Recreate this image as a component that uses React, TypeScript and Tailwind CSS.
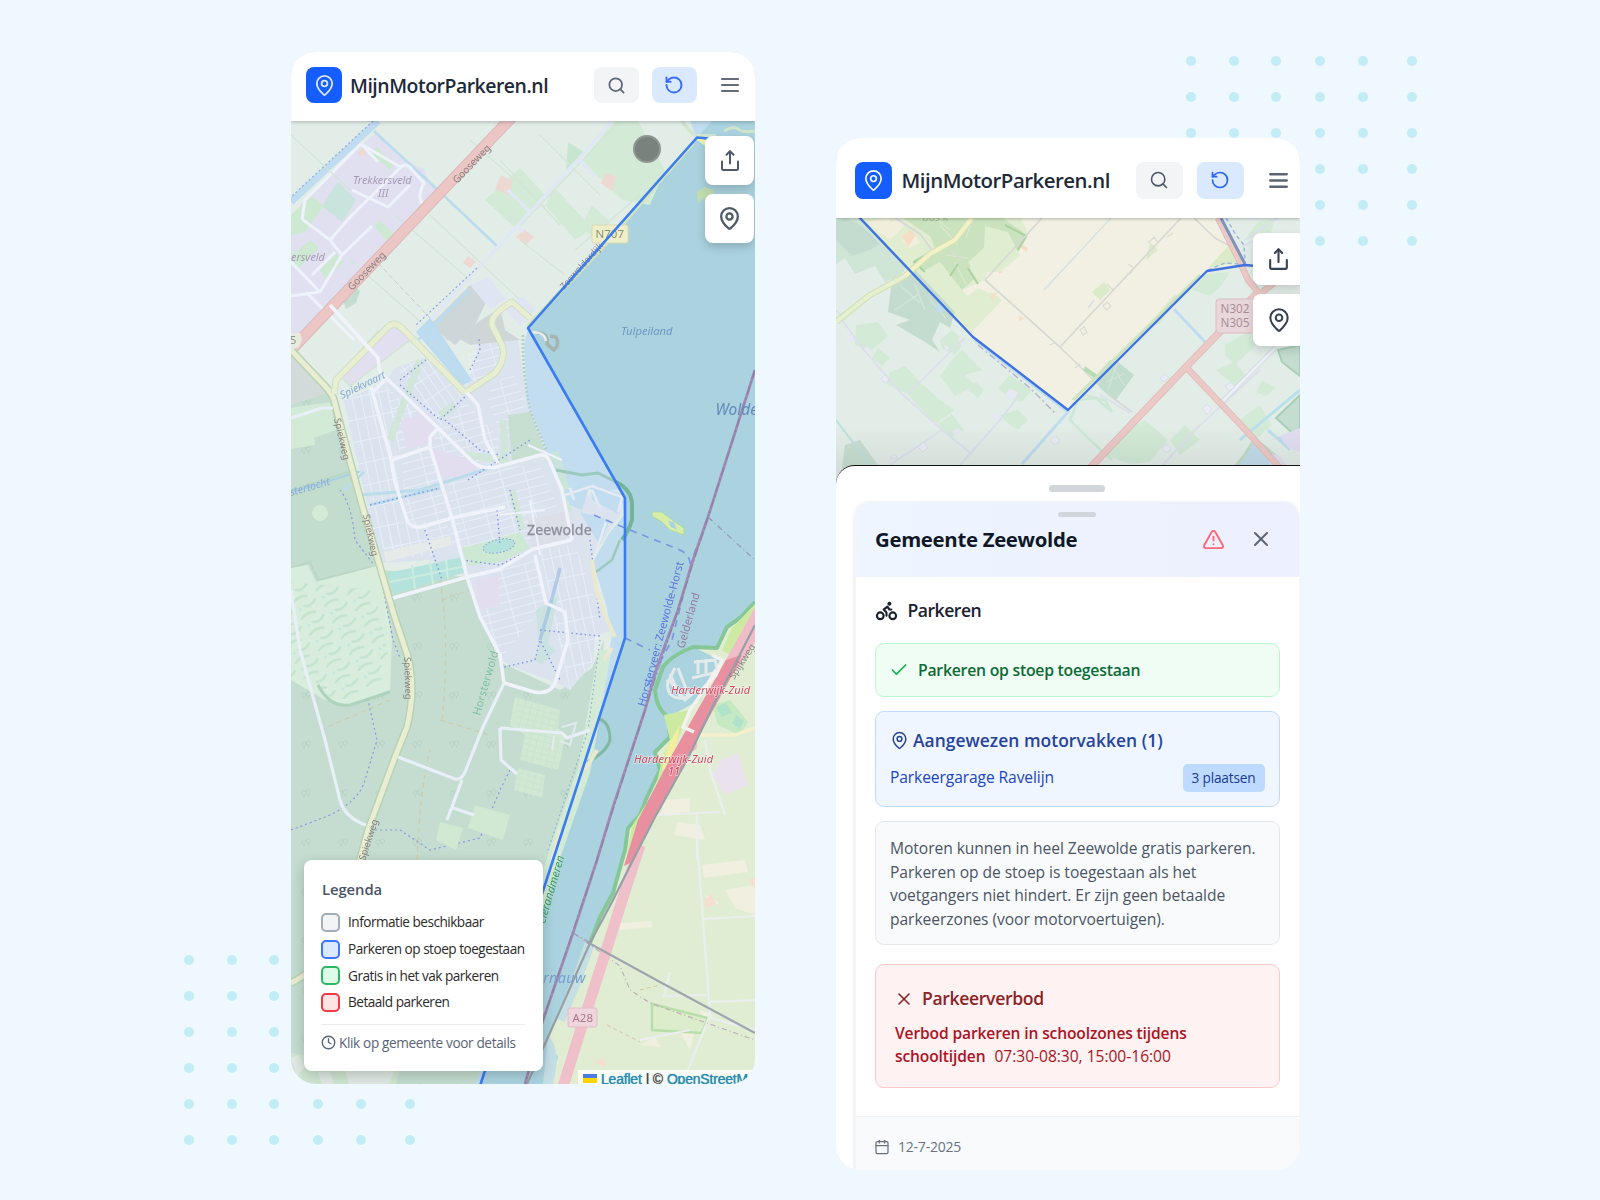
import React from 'react';
import { MapPin, Search, RotateCcw, TriangleAlert, X, Check, Calendar, Clock, Bike } from 'lucide-react';

const UI = "font-['Open_Sans','Noto_Sans',sans-serif]";

const COLS = [5, 48, 90, 134, 177, 226];
const ROWS = [5, 41, 77, 113, 149, 185];

function Dots() {
  return (
    <svg width="231" height="190" viewBox="0 0 231 190" fill="#c2ecf6">
      {ROWS.map((y) => COLS.map((x) => <circle key={x + '-' + y} cx={x} cy={y} r="5" />))}
    </svg>
  );
}

function ShareIcon({ size }: { size: number }) {
  return (
    <svg width={size} height={size} viewBox="0 0 24 24" fill="none" stroke="currentColor" strokeWidth="2" strokeLinecap="round" strokeLinejoin="round">
      <path d="M12 14.500V2.500" />
      <path d="m8.500 5.700 3.500-3.500L15.500 5.700" />
      <path d="M4 12.500v7a1.500 1.500 0 0 0 1.500 1.500h13a1.500 1.500 0 0 0 1.500-1.500v-7" />
    </svg>
  );
}

function MenuIcon({ size }: { size: number }) {
  return (
    <svg width={size} height={size} viewBox="0 0 24 24" fill="none" stroke="currentColor" strokeWidth="2.200" strokeLinecap="round">
      <path d="M4 6h16M4 12h16M4 18h16" />
    </svg>
  );
}

function Patterns() {
  return (
    <defs>
      <pattern id="stA" width="9" height="22" patternUnits="userSpaceOnUse" patternTransform="rotate(-12)">
        <path d="M0 0V22M0 0H9" stroke="#e9eff9" strokeWidth="2" fill="none" />
      </pattern>
      <pattern id="stB" width="24" height="8" patternUnits="userSpaceOnUse" patternTransform="rotate(-15)">
        <path d="M0 0V8M0 0H24" stroke="#e9eff9" strokeWidth="2" fill="none" />
      </pattern>
      <pattern id="stC" width="8" height="19" patternUnits="userSpaceOnUse" patternTransform="rotate(-34)">
        <path d="M0 0V19M0 0H8" stroke="#e9eff9" strokeWidth="2" fill="none" />
      </pattern>
      <pattern id="wood" width="37" height="49" patternUnits="userSpaceOnUse">
        <g fill="none" stroke="#b4d1c1" strokeWidth="0.8">
          <circle cx="8" cy="9" r="2.200" /><circle cx="12.500" cy="8" r="2.200" /><path d="M8 11v3M12.500 10v3" />
        </g>
      </pattern>
      <pattern id="holes" width="26" height="18" patternUnits="userSpaceOnUse" patternTransform="rotate(-28)">
        <path d="M2 4q8-4 15 0M10 12q6 4 13-1" stroke="#c4e3cf" strokeWidth="2.500" fill="none" strokeLinecap="round" />
        <circle cx="5" cy="13" r="1.500" fill="#bfe5e2" />
      </pattern>
      <pattern id="plots" width="7" height="6" patternUnits="userSpaceOnUse" patternTransform="rotate(14)">
        <path d="M0 0H7M0 0V6" stroke="#c6e0cc" strokeWidth="1" fill="none" />
      </pattern>
    </defs>
  );
}

function PhoneMap() {
  return (
    <svg className="absolute inset-0 font-['Noto_Sans',sans-serif] blur-[0.4px]" width="464" height="963" viewBox="291 121 464 963" fill="none">
      <Patterns />
      <rect x="291" y="121" width="464" height="963" fill="#aad3df" />
      {/* municipality */}
      <path d="M291 121H712L697 137.500 528 328 625 498V638L553 860 480 1084H291Z" fill="#c1ddef" />
      <path d="M291 121H690L697 139 528 328 524 345 527 400 545 445 548 470 566 488 620 490 624 515 608 535 593 562 606 605 612 635 602 690 588 770 566 830 540 900 476 1084H291Z" fill="#e3ede8" />
      <path d="M682 121q8 12 14 15h20" stroke="#d0e6d2" strokeWidth="4" />

      {/* industrial estates */}
      <path d="M376 133 406 160 425 170 430 185 437 190 352 282 334 296 320 320 291 345V225L300 205 355 150Z" fill="#e1e0f1" />
      <path d="M378 121 291 202" stroke="#bfdcf0" strokeWidth="7" />
      <path d="M373 121 291 197" stroke="#94aae0" strokeWidth="1.200" strokeDasharray="2 2.500" />
      <path d="M374 131 440 192 497 246" stroke="#bbdcec" strokeWidth="2.500" />
      <path d="M291 215 312 196 324 206 305 232 291 236ZM376 146l18 18-4 6-18-16ZM380 220l14 14-8 6-12-14Z" fill="#cde9d2" />
      <path d="M338 182 356 200 342 222 322 206Z" fill="#c8e4dc" />
      <path d="M291 255l20-15 8 8-22 22ZM320 270l16-16 8 8-18 18Z" fill="#cde9d2" />
      <path d="M302 219 305 200 361 144 378 162M330 240 342 255 320 292 291 296M330 240 352 215 402 166Q408 163 412 170L424 183Q416 198 424 206M342 255 372 226M302 219 330 240M306 292 322 308 354 340M352 190 388 207 410 185M312 275 335 252M291 262 320 292M361 144 402 168" stroke="#edf2fb" strokeWidth="3" strokeLinejoin="round" />

      {/* fields */}
      <path d="M615 121 638 121 665 170 650 205 622 200 582 160ZM520 168 545 195 515 228 485 200ZM555 188 592 228 575 240 545 205ZM592 205 610 222 600 240 580 228Z" fill="#d3ead7" />
      <path d="M568 142 584 152 566 170Z" fill="#c6e6d0" />
      <path d="M501 175l12 6-4 14-14-6ZM606 173l10 4-4 14-12-8ZM524 229l10 8-8 8-10-8ZM468 256l8 6-6 6-7-5ZM358 152l6-4 2 6-6 3Z" fill="#edd9d2" />
      <path d="M342 297l12-12 6 6-4 12-10 6Z" fill="#c4ddd0" />
      <path d="M291 135 350 190M430 215 520 300M350 260 430 330M395 215 470 280M500 160 560 225M540 135 600 195M575 250 640 195M520 240 565 275M620 121 520 226M470 140 545 207" stroke="#d2e5d6" strokeWidth="1.200" />
      <path d="M612 121 579 159 412 340M579 159 594 176M508 190 530 212M518 226 523 232" stroke="#dfe8f3" strokeWidth="3.500" />
      <path d="M477 268 416 325" stroke="#8fa6e6" strokeWidth="1.200" strokeDasharray="2 2.500" />
      <path d="M378 263 430 318" stroke="#c9cdb8" strokeWidth="1" strokeDasharray="5 3" />

      {/* Gooseweg */}
      <path d="M512 117 291 350" stroke="#d9b9b6" strokeWidth="11.500" />
      <path d="M512 117 291 350" stroke="#ebc6c5" strokeWidth="9.500" />

      {/* dark woodland */}
      <path d="M291 351 333 395 347 450 362 510 380 570 467 577 482 620 500 662 560 690 592 668 604 640 600 690 588 770 560 845 540 900 476 1084H291Z" fill="#c4ddd0" />
      <path d="M291 351 333 395 347 450 362 510 380 570 467 577 482 620 500 662 560 690 590 668 588 770 560 845 476 1084H291Z" fill="url(#wood)" />
      <path d="M291 355 330 392 291 405Z" fill="#d2dbda" />
      <path d="M291 408 330 402 336 430 291 446ZM291 425l20-5 4 25-24 4Z" fill="#d3ead7" />
      <path d="M291 490 355 470 380 565 318 580 310 562 291 568Z" fill="#c2dccd" stroke="#b7d5c3" strokeWidth="1.500" />
      <path d="M291 568 308 565 316 582 380 565 392 640 390 690 350 705 325 700 291 680Z" fill="#d9eddc" />
      <path d="M291 582 375 590 388 655 385 685 350 700 322 695 315 680 291 678Z" fill="url(#holes)" />
      <path d="M318 685Q330 708 350 705L390 692" stroke="#aed3bc" strokeWidth="3" />
      <circle cx="320" cy="513" r="8" fill="#d3ead7" />
      <path d="M291 492C320 485 330 480 365 470" stroke="#a9d0e4" strokeWidth="2" />
      <path d="M340 490Q352 505 355 540L374 565M291 830 330 815Q360 800 365 780L377 740 368 700M375 830 400 830 430 850 480 838 500 790 510 770M380 572 393 640 400 658" stroke="#8899dd" strokeWidth="1.200" strokeDasharray="2 3" />
      <path d="M440 580Q450 640 442 720M417 860Q420 790 430 750M440 720 490 735M442 600 470 590M320 730 390 700" stroke="#cfcba8" strokeWidth="1.200" strokeDasharray="5 4" />

      {/* grassy areas */}
      <path d="M515 697 560 710 558 728 566 735 558 770 520 760 525 735 510 725ZM518 768 545 775 542 798 514 790ZM475 805 510 815 503 840 468 828ZM440 822 463 828 456 850 436 840Z" fill="#d1e8d3" />
      <path d="M515 697 560 710 558 770 520 760ZM518 768 545 775 542 798 514 790Z" fill="url(#plots)" />
      <path d="M605 650 584 770 556 850 540 905" stroke="#d3ead7" strokeWidth="13" />
      <path d="M600 640 588 730 548 850" stroke="#8ea9d8" strokeWidth="1.200" strokeDasharray="1.500 3" />

      {/* town */}
      <path d="M343 400 383 383 397 367 423 358 467 387 480 340 518 340 527 397 547 453 563 487 580 497 620 490 622 513 610 530 590 560 600 607 613 630 595 637 593 663 570 690 557 683 513 667 500 660 480 617 467 577 430 560 380 563 360 473Z" fill="#dbe3ef" />
      <path d="M343 400 383 383 430 430 400 440 398 555 375 545 360 473Z" fill="url(#stA)" />
      <path d="M385 385 440 430 480 462 440 468 450 545 408 520 398 440Z" fill="url(#stB)" />
      <path d="M397 367 423 358 465 392 440 428Z" fill="url(#stC)" />
      <path d="M440 430 465 400 500 440 490 468 478 462ZM448 470 540 465 572 540 452 548Z" fill="url(#stB)" />
      <path d="M468 345 502 335 500 370 470 385ZM486 395 510 370 526 400 515 440 498 430Z" fill="url(#stB)" />
      <path d="M480 575 538 560 545 605 500 660 482 617Z" fill="url(#stB)" />
      <path d="M540 550 575 545 592 590 600 630 592 663 570 690 550 600Z" fill="url(#stA)" />
      <path d="M384 524 430 520 440 555 385 560Z" fill="url(#stA)" />
      <path d="M432 448 470 460 480 475 440 478ZM400 420 430 412 435 440 408 450ZM473 580 498 575 500 605 480 610Z" fill="#e3deef" />
      <path d="M508 415 530 412 545 452 512 462Z" fill="#c6dfd0" />
      <path d="M390 440 420 360M503 420 505 460 465 455M545 460 556 455 566 490 570 530M440 415 455 405M512 490 522 530" stroke="#cde6d3" strokeWidth="7" strokeOpacity=".8" />
      <path d="M388 573 462 557 466 572 394 594Z" fill="#b3e3dc" />
      <path d="M412 565l3 24M430 562l3 22M446 560l2 19M390 582 466 566" stroke="#cdebe0" strokeWidth="2" />
      <path d="M462 548 520 532 530 548 500 562 468 566Z" fill="#cde8d3" />
      <ellipse cx="499" cy="546" rx="16" ry="6.500" transform="rotate(-12 499 546)" fill="#b5e2dc" stroke="#8899dd" strokeDasharray="1.500 2" />
      <path d="M384 552 450 536 452 545 386 562Z" fill="#e6ebe9" />
      <path d="M528 520 570 510 576 535 532 548Z" fill="#dcdfe8" />
      <path d="M448 341Q458 325 470 330L478 322 500 308 505 330 520 340 470 345 430 322Z" fill="#cfd6d8" />
      <path d="M430 325 470 285 492 290 475 325 455 345Z" fill="#cdd6d8" />
      <path d="M418 340 470 290M470 380 450 350 430 320 418 332 462 384Z" stroke="#bbdcf0" strokeWidth="3" fill="#bfdcef" />
      <path d="M470 285l18-8 18 22-16 10ZM505 308l18-12 12 14-15 16Z" fill="#dfe5f2" />
      <path d="M377 332 398 322 410 340 350 386 340 375Z" fill="#e1dff0" stroke="#cfe6d5" strokeWidth="1.500" />
      <path d="M563 490 590 485 582 510 570 505ZM590 480 622 495 618 514 592 500ZM580 512 610 520 600 545" fill="#c1ddef" />
      <path d="M565 495 592 486 622 497 618 512M592 490 600 508M574 500 570 488M606 522 595 555" stroke="#e4ebf4" strokeWidth="2.500" />
      <path d="M536 610 558 596 545 660 540 665ZM543 640 556 650 543 664 534 660Z" fill="#cbe3e0" />
      <path d="M560 568Q552 600 540 640" stroke="#8fb5e5" strokeWidth="3.500" strokeOpacity=".55" />
      <path d="M360 495 420 490 490 468M370 505 440 488M364 472 345 490" stroke="#bbdcea" strokeWidth="3" />
      <path d="M400 380 432 355M400 385 440 420 470 392M468 480 530 440M445 420 480 450 500 455M470 370 480 350 479 338M510 490 520 530M370 505 440 488M425 530 442 580M497 510 500 545M462 560 500 565 530 550M590 540 600 620M500 668 535 660 540 640 560 680M540 630 600 636" stroke="#7f92e6" strokeWidth="1.400" strokeDasharray="1.500 3" />

      {/* shore details */}
      <path d="M556 470 582 475 598 473 618 483" stroke="#9cc9bd" strokeWidth="3" />
      <path d="M616 482Q632 490 632 505V520Q629 530 622 540" stroke="#74b49d" strokeWidth="4" />
      <path d="M620 540 612 560 596 572" stroke="#9cc9bd" strokeWidth="2.500" />
      <path d="M599 719Q610 722 610 740Q606 753 587 762" stroke="#7fb9a3" strokeWidth="3" />
      <path d="M592 560 596 590 605 615 615 637M604 660 612 648M597 750 585 770M560 830 552 860" stroke="#ebe8d0" strokeWidth="4" />
      <path d="M537 333Q549 333 547 344L554 350Q560 345 556 337L550 336" stroke="#a5b5b0" strokeWidth="3.500" />
      <path d="M531 332Q545 332 546 341" stroke="#e6ecec" strokeWidth="2.500" />
      <path d="M523 335Q522 370 530 410L546 450" stroke="#afd0c5" strokeWidth="2.500" strokeDasharray="2 2" />

      {/* yellow roads */}
      <path d="M291 350 325 386Q333 395 334 400L347 450 362 505 378 560 394 615 408 657Q416 690 407 727L395 757 368 830 357 870Q340 960 291 983" stroke="#b8d2b4" strokeWidth="8" />
      <path d="M291 350 325 386Q333 395 334 400L347 450 362 505 378 560 394 615 408 657Q416 690 407 727L395 757 368 830 357 870Q340 960 291 983" stroke="#e9eed3" strokeWidth="5" />
      <path d="M334 394 336 380 388 327Q394 321 402 328L465 393M465 393 495 373Q507 358 502 345L492 325Q490 315 512 302L530 318" stroke="#cfe0c4" strokeWidth="7" strokeLinejoin="round" />
      <path d="M334 394 336 380 388 327Q394 321 402 328L465 393M465 393 495 373Q507 358 502 345L492 325Q490 315 512 302L530 318" stroke="#e9eed3" strokeWidth="5" strokeLinejoin="round" />
      <path d="M528 326 560 292 605 245 650 192 693 143" stroke="#d3e2bd" strokeWidth="4" />

      {/* main town streets */}
      <path d="M330 305 378 358 380 372 437 427 473 462Q483 471 500 466L540 455Q547 454 550 462L562 490 572 540M371 387 390 455 395 482 407 520Q412 530 425 526L452 518M373 392 385 380M392 460 430 447 430 437 438 428M430 447 452 518 467 577 480 617 500 655 504 683 534 692Q552 695 556 680L568 640 565 612 546 603 535 555M393 598 467 577 500 569 533 549 572 540M467 393 478 405 485 440 498 463M452 518 505 507" stroke="#f0f3fb" strokeWidth="3.500" strokeLinejoin="round" />
      <path d="M504 683 483 727 465 772Q462 780 455 779L398 757M462 780 447 820M453 808 474 815M500 728 562 733 567 738 590 730M500 728 501 760 517 774M291 590 300 650 325 740 340 800Q345 818 366 825M291 418 322 408 333 408" stroke="#e9eff8" strokeWidth="3.200" strokeLinejoin="round" />
      <path d="M528 445 562 460M498 515 545 510M530 500 540 555" stroke="#edf2fb" strokeWidth="2" />
      <path d="M562 727l14-4-6 22-10-4M552 750l2-14" stroke="#e2eaf0" strokeWidth="2" />

      {/* ferry and islands */}
      <path d="M594 515 625 528 680 550Q692 556 690 568L672 640 645 690M690 568 697 545M625 638 650 650" stroke="#7f95e0" strokeWidth="1.700" strokeDasharray="7 6" />
      <path d="M652 512 662 512 675 522 684 528V535L670 530 662 522 652 516Z" fill="#d7eea8" stroke="#aad9a0" />
      <path d="M668 521l6 1 3 8-6-3Z" fill="#aad3df" />
      <path d="M697 192 705 187 714 190 712 205 703 198 698 204Z" fill="#bfdcae" />
      <path d="M697 137 715 150" stroke="#edf0b0" strokeWidth="5" />
      <path d="M724 131q10-6 14-2t17 2" stroke="#cde4c8" strokeWidth="3" />

      {/* Gelderland shore */}
      <path d="M755 602 740 618 727 627 717 648 693 647 663 667 655 697 668 717V737L655 752 660 770 647 797 640 815 628 828 625 850 613 893 600 917 590 943 580 973 563 1007 547 1040 558 1057 550 1084H755Z" fill="#e0edd3" />
      <path d="M693 647 663 667 655 697 668 717 700 700 720 660Z" fill="#aad3df" />
      <path d="M755 602 740 618 727 627 717 648 693 647Q672 655 663 667L655 690Q656 708 668 717L670 737 655 752 660 770 647 797 640 815 628 828 625 850 613 893 600 917 590 943" stroke="#86c79a" strokeWidth="4" strokeLinejoin="round" />
      <path d="M755 604 732 628 722 650 730 655 755 628ZM664 715 690 710 682 730 665 770 640 840 625 865 632 826 655 790 662 760 670 740Z" fill="#cdeaa2" />
      <path d="M668 745 680 725 672 768 662 770Z" fill="#f4ee9f" />
      <path d="M668 680Q665 700 685 698L695 690M675 668l-6 12 16 20 14-12M670 674l10 22M678 668l10 26M694 662 715 660 718 672 692 678M698 660v14M706 659v14" stroke="#e2ebea" strokeWidth="3" />
      <path d="M590 943 575 985 560 1020" stroke="#c5dfe3" strokeWidth="10" />
      <path d="M548 1035Q562 1050 553 1084H543Z" fill="#c6dfe6" />
      <path d="M712 705 730 700 748 722 740 735 718 725Z" fill="#c5e9c2" />
      <path d="M716 707l10-4 6 10-10 4ZM736 715l8 6-4 8-8-6Z" fill="#b0e2ca" />
      <path d="M720 760 738 753 748 785 725 795 712 775Z" fill="#eae3ee" />
      <path d="M665 800 690 798 690 812 660 815ZM677 822 700 825 705 840 675 835ZM702 865 745 860 748 872 704 878ZM725 890 755 885V915L735 908ZM706 895l14 8-12 4ZM620 923l32-2v6l-32 3ZM680 1032 695 1030 690 1050ZM640 1045l15-8 6 10ZM700 1010l14 5-10 5Z" fill="#f1efe0" />
      <path d="M704 900l8-6 4 10-10 4ZM749 880l6-3v12ZM595 1062l8-4 4 10Z" fill="#f6dfd0" />
      <path d="M652 1004 708 1018 702 1033 652 1030Z" fill="#dcedcb" stroke="#b8dfa9" strokeWidth="2.500" />
      <path d="M697 840 700 880 706 960 710 1015 688 1070M703 919 755 916M710 1018 755 1030M706 995 664 996 670 972M640 1040 690 1030M655 815 720 812M697 860 697 815M705 740 710 770 725 815M710 1002 755 1000" stroke="#ebeef0" strokeWidth="2.200" />
      <path d="M576 935 620 966 630 990 650 1003 755 1040" stroke="#bfaebb" strokeWidth="1.200" strokeDasharray="5 3 1 3" />
      <path d="M640 990 660 985M607 1025 640 1042" stroke="#d9c8a4" strokeDasharray="4 3" />
      <path d="M755 728 735 735 695 735" stroke="#f3f0cc" strokeWidth="3.500" />
      <path d="M689 745q8-8 8 0t-10 6Z" fill="#ecb7c3" />

      {/* highway */}
      <path d="M640 845 626 888 607 948 585 1016 562 1090" stroke="#efbfca" strokeWidth="11" />
      <path d="M757 604 713 683 722 690 757 640Z" fill="#efbcc8" />
      <path d="M726 660 713 683 673 753 638 820 624 866 632 862 653 819 685 762 712 712 736 668 742 655Z" fill="#e8909f" />
      <path d="M755 625 735 664 712 708 688 758 655 817 632 862 613 900 590 943 566 997 527 1084" stroke="#989fa6" strokeWidth="2.200" />
      <path d="M587 942 660 982 755 1033" stroke="#9fa6ad" strokeWidth="2.200" />
      <path d="M716 670 704 690 690 710 683 727 694 732M700 692 716 675 722 660 712 655" stroke="#f4f2ef" strokeWidth="3.500" />

      {/* province border */}
      <path d="M755 370 708 517 693 560 678 610 657 667 645 710 613 807 597 860 573 933 543 1020 525 1084" stroke="#a08cb2" strokeWidth="2.800" />
      <path d="M755 370 708 517 678 610 645 710 597 860 543 1020 525 1084" stroke="#7d6d9c" strokeWidth="1.500" strokeDasharray="9 3 2 3" strokeOpacity=".4" />
      <path d="M708 517 755 560M573 933 590 943" stroke="#9c98ae" strokeWidth="1.200" strokeDasharray="6 3 1 3" />

      {/* bottom-left fields */}
      <path d="M291 1053 400 1070 396 1084H291Z" fill="#cfe6d1" />
      <path d="M318 1072h12l4 12h-12ZM345 1070h50l-6 14h-40ZM291 1058l8-3 6 12-8 10Z" fill="#e0e9e3" />

      {/* labels */}
      <g fill="#a79bb4" fontSize="10.800" fontStyle="italic">
        <text x="353" y="183.500">Trekkersveld</text>
        <text x="378" y="197">III</text>
        <text x="291" y="261">ersveld</text>
      </g>
      <g fill="#8a7f80" fontSize="10">
        <text transform="translate(457 184) rotate(-46)">Gooseweg</text>
        <text transform="translate(352 291) rotate(-46)">Gooseweg</text>
        <text transform="translate(334 419) rotate(77)" fontSize="9.500">Spiekweg</text>
        <text transform="translate(363 515) rotate(78)" fontSize="9.500">Spiekweg</text>
        <text transform="translate(404 657) rotate(88)" fontSize="9.500">Spiekweg</text>
        <text transform="translate(365 861) rotate(-72)" fontSize="9.500">Spiekweg</text>
        <text transform="translate(734 680) rotate(-57)" fontSize="9.500">Spijkweg</text>
        <text transform="translate(564 290) rotate(-48)" fontSize="9">Zeewolderdijk</text>
      </g>
      <g fill="#86abd8" fontStyle="italic">
        <text transform="translate(342 399) rotate(-26)" fontSize="10.500">Spiekvaart</text>
        <text transform="translate(291 496) rotate(-16)" fontSize="10.500">stertocht</text>
      </g>
      <text transform="translate(480 716) rotate(-74)" fontSize="11" fill="#7fbfa3" letterSpacing=".2">Horsterwold</text>
      <rect x="592" y="225" width="36" height="18" rx="2" fill="#eeeec8" stroke="#d9dbb2" />
      <text x="595.500" y="238" fontSize="11.500" fill="#8f8f7c">N707</text>

      {/* outline */}
      <path d="M720 139.500 697 137.500 528 328 625 498V638L553 860 480 1086" stroke="#3b7cf0" strokeWidth="2.600" strokeLinejoin="round" />

      <text x="621" y="335" fontSize="11.200" fontStyle="italic" fill="#6f96c4">Tulpeiland</text>
      <text x="715.500" y="414.500" fontSize="15.500" fontStyle="italic" fill="#6489bd">Wolderwijd</text>
      <text x="527" y="535" fontSize="14.200" fill="#8b909c" stroke="#8b909c" strokeWidth=".3" letterSpacing=".1">Zeewolde</text>
      <text transform="translate(645 707) rotate(-75)" fontSize="11" fill="#5d74e0">Horsterveer: Zeewolde-Horst</text>
      <text transform="translate(684 649) rotate(-74)" fontSize="11" fill="#96799f">Gelderland</text>
      <g fill="#d0485f" fontSize="11" fontStyle="italic" stroke="#fff" strokeWidth="1.600" strokeOpacity=".5" paintOrder="stroke">
        <text x="671" y="694" textLength="79">Harderwijk-Zuid</text>
        <text x="634" y="763" textLength="79">Harderwijk-Zuid</text>
        <text x="668" y="775">11</text>
      </g>
      <text transform="translate(545 924) rotate(-74)" fontSize="11.300" fontStyle="italic" fill="#3a9d5a">elerandmeren</text>
      <text x="543" y="983" fontSize="14.500" fontStyle="italic" fill="#79a0cf" letterSpacing=".3">rnauw</text>
      <rect x="568" y="1008" width="29" height="19" rx="2" fill="#efd5dd" stroke="#e4bcc8" />
      <text x="572.500" y="1022" fontSize="11.500" fill="#a8788a">A28</text>
      <path d="M291 333h9l2 6-3 8-8 3Z" fill="#e6eadf" />
      <text x="290" y="343.500" fontSize="11" fill="#8f9589">5</text>

      {/* touch pointer */}
      <circle cx="647" cy="149" r="14" fill="#8d9691" />
      <circle cx="647" cy="149" r="12" fill="#7a827e" />
    </svg>
  );
}

function DetailMap() {
  return (
    <svg className="absolute inset-0 font-['Noto_Sans',sans-serif]" width="464" height="262" viewBox="836 218 464 262" fill="none">
      <rect x="836" y="218" width="464" height="262" fill="#e3ede8" />
      {/* unshaded area */}
      <path d="M860 218 973 337 1068 410 1207 271 1245 265 1220 218Z" fill="#f1f0e3" />
      <path d="M860 218H1020L1028 232 990 262 985 280 1000 294 972 333Z" fill="#e0edd0" />
      <path d="M1040 218 985 280 962 290 968 296 978 288 1000 298 972 330 980 345 1068 410 1200 278 1215 218Z" fill="#f1f0e3" />
      <path d="M970 300 992 292 1002 300 972 332 958 318Z" fill="#e0edd0" />
      <path d="M896 218 905 225 890 240 880 232ZM902 240l12-6 6 8-10 6ZM868 222l20-4 8 8-16 8Z" fill="#f1eedb" />
      <path d="M902 236l8-6 6 5-8 12ZM998 254l6-5 4 4-6 4ZM1020 243l8 5-2 4-7-6ZM998 268l5 4-4 2ZM1018 316l6 2-4 4ZM990 296l7-4-4 8Z" fill="#f6ddc8" />
      <path d="M903 218H1003L1028 236 1018 252 998 236 985 246 985 260 968 268 975 278 962 290 940 262 922 272 914 260 935 248 930 236Z" fill="#cbe2be" />
      <path d="M985 226 1008 232 1020 256 1000 272 975 272 968 262 984 248Z" fill="#dfedd0" />
      <path d="M940 225 958 245M972 220 966 238M955 262 966 285M935 218 950 230M945 255 968 258" stroke="#dbe9cd" strokeWidth="1.200" />
      <path d="M1005 225 1026 236 1018 250M968 268 978 284M925 272 914 262 935 250M958 264 950 276" stroke="#a9d3a0" strokeWidth="2" />
      <path d="M1150 242 1158 250 1146 260ZM1175 294l5 3-22 28-5-5ZM1208 268 1228 246 1240 262Z" fill="#dbebc8" />
      <path d="M1092 292 1104 282 1110 290 1100 300Z" fill="#dbebc8" />
      <path d="M895 218 920 234 932 250M950 250 962 260" stroke="#d8dad8" strokeWidth="2" />
      <path d="M985 280 1060 347 1110 396 1132 412M1042 218 985 280M1181 218 1060 347M1194 218 1215 238 1230 246" stroke="#d7d9d4" strokeWidth="1.700" />
      <path d="M1111 218 1044 290" stroke="#cfe2e2" strokeWidth="1.200" />
      <path d="M1148 243 1154 237 1158 243M1167 237 1173 233M1128 264 1134 268 1130 274M1107 284 1113 290M1088 308 1094 300M1049 345 1055 343M1075 368 1080 364M1103 306l4-4 4 4-4 4ZM1080 330l4-3 3 5-4 3Z" stroke="#dcdbd8" strokeWidth="1.300" />

      {/* shaded parcels */}
      <path d="M836 218 858 218 906 268 900 276 885 282 875 266 855 274 845 258 836 264Z" fill="#cfe5d6" />
      <path d="M836 222 846 218 862 226 880 244 870 250 852 256 836 240Z" fill="#c4dccf" />
      <path d="M892 280 913 268 955 312 950 328 940 322 932 340 940 352 925 342 896 325 910 320 888 312Z" fill="#c4dccf" />
      <path d="M900 285l20 18M895 310l24-16M915 285l10 25M930 300l16 18" stroke="#d3e6da" strokeWidth="1.200" />
      <path d="M937 304l6 2-1 7-6-2Z" fill="#c1ddef" />
      <path d="M856 325 878 322 888 336 872 350 855 345ZM878 348 890 358 882 366 872 358ZM940 340 952 330 965 342 955 355 942 348ZM950 362 962 350 982 370 965 375 975 385 955 396 940 376ZM890 372 905 366 920 382 940 400 955 410 935 424 920 408 908 394 886 384ZM938 424 952 414 964 430 950 438ZM998 388 1010 375 1032 390 1022 402 1010 400ZM1000 415 1018 410 1028 420 1018 430 1010 425ZM968 390l8-8 8 8-6 8Z" fill="#d3ead7" />
      <path d="M1010 388l8 5-6 8-7-6ZM993 415l5-3 3 10-6-1ZM865 345l6 5-4 3ZM943 344l6 3-2 4ZM958 338l8 3-4 6ZM952 432l6-4 4 4-6 4ZM880 378l7 3-4 4ZM847 336l6-2 2 6-5 3Z" fill="#e6e8f3" />
      <path d="M1110 360 1118 362 1134 375 1116 400 1100 388 1096 376Z" fill="#c2dccd" />
      <path d="M1112 365l12 20M1106 382l18-8M1118 360l-10 30" stroke="#d5e8db" />
      <path d="M1084 368 1098 378" stroke="#b7dcb5" strokeWidth="4" />
      <path d="M1192 290 1207 274 1230 272 1222 285 1210 296ZM1225 345 1250 330 1256 345 1235 365 1225 355ZM1216 370 1235 362 1248 378 1238 388ZM1105 455 1125 430 1145 420 1168 440 1150 462 1130 464ZM1170 440 1185 425 1200 440 1180 455ZM1258 222 1275 218 1270 236 1246 238ZM1240 420 1260 405 1272 425 1255 440ZM1262 380 1276 388 1266 396 1256 392Z" fill="#d3ead7" />
      <path d="M1278 350 1300 345V376L1282 362ZM1300 395V440L1276 418Z" fill="#c4ddd0" stroke="#a9d0b6" strokeWidth="2" />
      <path d="M1254 440l10 6 16 14-6 8h-40l10-12Z" fill="#c2ddeb" stroke="#bfdcc6" strokeWidth="3" />
      <path d="M1240 440 1300 390M1268 430 1290 450M1278 438l20 8" stroke="#bcdfec" strokeWidth="3" />
      <path d="M1280 436 1300 428V452L1288 448ZM1264 452l16 4 8 12h-16Z" fill="#e1def1" />
      <path d="M845 445 860 440 878 465 870 468 842 468Z" fill="#c8dfd1" />

      {/* minor roads */}
      <path d="M842 320 864 350 900 392 942 430 972 454M890 465 942 430M908 394 950 352 965 338M960 465 1000 420 1020 394M836 310 845 320M1130 413 1100 395M1160 468 1195 430 1260 370M1270 232 1243 246M1245 240 1278 218" stroke="#dbe0ea" strokeWidth="2" />
      <path d="M1222 402 1275 348" stroke="#cfd4de" strokeWidth="4.500" />
      <path d="M1222 402 1275 348" stroke="#ebeff6" strokeWidth="3.200" />
      <path d="M881 378l4-3 4 5-5 3ZM918 447l6-5 4 6-6 4ZM890 458l5-4 3 5ZM1050 440l6-4 4 5-6 4ZM1162 448l5-4 4 5-5 4ZM1202 408l5-4 5 5-5 6ZM1225 386l6-4 4 5-6 4ZM1160 378l5-4 4 4-6 4Z" fill="#eaecf5" stroke="#d5dae6" strokeWidth=".8" />
      <path d="M978 345 1030 388 1055 413" stroke="#b9b6c8" strokeWidth="1.500" strokeDasharray="7 3 2 3" />
      <path d="M975 340 1068 412 1022 464M1174 309 1205 342" stroke="#bfdcf0" strokeWidth="3" />
      <path d="M1072 405 1085 395 1105 400 1112 412 1096 398 1078 400 1070 420 1090 440 1112 460" stroke="#cde8d6" strokeWidth="2.500" />
      <path d="M836 420 855 445 872 468" stroke="#c0e0e0" strokeWidth="2" />
      <path d="M1073 400 1200 275" stroke="#cbe5c2" strokeWidth="3" />

      {/* yellow road */}
      <path d="M836 322 870 295 905 276 930 254 955 240 972 218" stroke="#d3e2bb" strokeWidth="6.500" />
      <path d="M836 322 870 295 905 276" stroke="#e6efd0" strokeWidth="4" />
      <path d="M905 276 930 254 955 240 972 218" stroke="#f3f2c5" strokeWidth="4" />

      {/* main roads */}
      <path d="M1090 468 1186 367 1215 337 1258 292" stroke="#dfb9b6" strokeWidth="7.500" />
      <path d="M1186 367 1240 424 1280 468M1218 218 1240 262 1248 280 1260 294 1300 262" stroke="#dfb9b6" strokeWidth="6.500" />
      <path d="M1090 468 1186 367 1215 337 1258 292" stroke="#ebc9c7" strokeWidth="6" />
      <path d="M1186 367 1240 424 1280 468M1218 218 1240 262 1248 280 1260 294 1300 262" stroke="#ebc9c7" strokeWidth="5" />
      <path d="M1221 218 1245 264" stroke="#7f93bd" strokeWidth="3" />
      <path d="M1226 218 1236 235 1244 245 1245 262M1208 270 1225 263 1240 264" stroke="#9cb6de" strokeWidth="1.500" strokeDasharray="4 3" />

      <rect x="1216" y="299" width="50" height="34" rx="3" fill="#ead7dc" stroke="#dcbcc4" />
      <text x="1220.500" y="313" fontSize="11.700" fill="#a98f96">N302</text>
      <text x="1220.500" y="327" fontSize="11.700" fill="#a98f96">N305</text>
      <text x="922" y="220.500" fontSize="10.500" fill="#a0bd9b">bos k</text>

      <path d="M858 216 973 337 1068 410 1207 271 1245 265 1256 266" stroke="#3f73e0" strokeWidth="2.400" strokeLinejoin="round" />
      <linearGradient id="fade" x1="0" y1="0" x2="0" y2="1">
        <stop offset="0" stopColor="#000" stopOpacity="0" />
        <stop offset="1" stopColor="#000" stopOpacity=".08" />
      </linearGradient>
      <rect x="836" y="425" width="464" height="55" fill="url(#fade)" />
    </svg>
  );
}

const LEGEND = [
  { label: 'Informatie beschikbaar', box: 'border-[#a3acbb] bg-[#f3f4f6]' },
  { label: 'Parkeren op stoep toegestaan', box: 'border-[#3b76ff] bg-[#dbe9fe]' },
  { label: 'Gratis in het vak parkeren', box: 'border-[#2bb865] bg-[#dcfce7]' },
  { label: 'Betaald parkeren', box: 'border-[#f03a45] bg-[#ffe2e2]' },
];

function OverviewPhone() {
  return (
    <section className="relative flex h-[1032px] w-[464px] flex-col overflow-hidden rounded-[25px] bg-white">
      <header className="z-10 flex h-[69px] shrink-0 items-center bg-white pb-[3px] pl-[15px] shadow-[0_1px_4px_rgba(0,0,0,0.25)]">
        <div className="flex size-9 items-center justify-center rounded-[8px] bg-[#155dfc] text-[#dbe6ff]">
          <MapPin size={23} strokeWidth={1.900} />
        </div>
        <h1 className="mt-px ml-[8px] w-[199px] text-[19.400px] font-semibold leading-none tracking-[-0.46px] whitespace-nowrap text-[#1e2939]">MijnMotorParkeren.nl</h1>
        <button className="ml-[45px] flex h-9 w-[45px] items-center justify-center rounded-[8px] bg-[#f3f4f6] text-[#5d6776]">
          <Search size={19} strokeWidth={2.200} />
        </button>
        <button className="ml-[13px] flex h-9 w-[45px] items-center justify-center rounded-[8px] bg-[#dbe9fe] pr-px text-[#3b6bfb]">
          <RotateCcw size={20} strokeWidth={2.300} />
        </button>
        <div className="ml-[21px] flex w-[24px] justify-center text-[#626c7b]"><MenuIcon size={24} /></div>
      </header>
      <div className="relative flex-1">
        <PhoneMap />
        <div className="absolute top-[15px] right-[1px] flex flex-col gap-[9px] text-[#4f5968]">
          <button className="flex size-[49px] items-center justify-center rounded-[8px] bg-white shadow-[0_4px_10px_rgba(0,0,0,0.18)]"><ShareIcon size={24} /></button>
          <button className="flex size-[49px] items-center justify-center rounded-[8px] bg-white shadow-[0_4px_10px_rgba(0,0,0,0.18)]"><MapPin size={25} strokeWidth={2.200} /></button>
        </div>
        <div className="absolute right-0 bottom-0 flex h-[14px] w-[177px] items-start overflow-hidden bg-white/80 pl-[5px] font-['Liberation_Sans',sans-serif] text-[14px] leading-[18px] tracking-[-0.2px] whitespace-nowrap text-[#444] [text-shadow:0_0_1px_currentColor]">
          <span className="mt-[4px] mr-1 flex w-[14px] shrink-0 flex-col"><i className="h-1 bg-[#4c7be1]" /><i className="h-[5px] bg-[#ffd500]" /></span>
          <span className="text-[#2a8bb0]">Leaflet</span><span className="mx-[4px]">| ©</span><span className="text-[#2a8bb0]">OpenStreetMap</span>
        </div>
        <div className="absolute bottom-[13px] left-[13px] flex h-[211px] w-[239px] flex-col rounded-[8px] bg-white px-[18px] pt-[17px] text-[14px] text-[#2b2b2b] shadow-[0_4px_14px_rgba(0,0,0,0.2)]">
          <h2 className="h-[31px] text-[14.800px] font-semibold leading-[24px] tracking-[-0.05px] text-[#4b5463]">Legenda</h2>
          <ul className="mt-[1px] -ml-px flex flex-col">
            {LEGEND.map((l) => (
              <li key={l.label} className="flex h-[26.700px] items-center">
                <span className={'size-[19px] shrink-0 rounded-[5px] border-2 ' + l.box} />
                <span className="ml-[8px] text-[13.600px] tracking-[-0.5px] whitespace-nowrap">{l.label}</span>
              </li>
            ))}
          </ul>
          <p className="mt-[8px] -ml-px flex h-[38px] items-center border-t border-[#e8eaee] pb-px whitespace-nowrap text-[#596476]">
            <Clock size={15} strokeWidth={2.200} />
            <span className="ml-[3px] text-[13.600px] tracking-[-0.36px]">Klik op gemeente voor details</span>
          </p>
        </div>
      </div>
    </section>
  );
}

function DetailPhone() {
  return (
    <section className="relative flex h-[1032px] w-[464px] flex-col overflow-hidden rounded-[25px] bg-white">
      <header className="z-10 flex h-[80px] shrink-0 items-center bg-white pt-[4px] pl-[18.500px] shadow-[0_1px_3px_rgba(0,0,0,0.25)]">
        <div className="flex size-[37px] items-center justify-center rounded-[8px] bg-[#155dfc] text-white">
          <MapPin size={23} strokeWidth={1.700} />
        </div>
        <h1 className="mt-px ml-[10px] w-[209px] text-[20.400px] font-semibold leading-none tracking-[-0.48px] whitespace-nowrap text-[#1e2939]">MijnMotorParkeren.nl</h1>
        <button className="ml-[25px] flex h-[37px] w-[47px] shrink-0 items-center justify-center rounded-[8px] bg-[#f3f4f6] text-[#4a5565]">
          <Search size={20} strokeWidth={1.900} />
        </button>
        <button className="ml-[14px] flex h-[37px] w-[47px] shrink-0 items-center justify-center rounded-[8px] bg-[#dbe9fe] pr-px text-[#2563fb]">
          <RotateCcw size={20} strokeWidth={2} />
        </button>
        <div className="ml-[22px] flex w-[25px] shrink-0 justify-center text-[#5b6574]"><MenuIcon size={25} /></div>
      </header>
      <div className="relative h-[247px] shrink-0">
        <DetailMap />
        <div className="absolute top-[15px] left-[417px] flex flex-col gap-[9px] text-[#364153]">
          <button className="flex size-[52px] items-center justify-center rounded-[8px] bg-white pr-px shadow-[0_4px_10px_rgba(0,0,0,0.15)]"><ShareIcon size={25} /></button>
          <button className="flex size-[52px] items-center justify-center rounded-[8px] bg-white pr-px shadow-[0_4px_10px_rgba(0,0,0,0.15)]"><MapPin size={26} strokeWidth={1.900} /></button>
        </div>
      </div>
      <div className="z-10 -mr-5 flex flex-1 flex-col rounded-tl-[19px] border-t border-[#111] bg-white pr-[21px] pl-[18px]">
        <div className="mt-[19px] ml-[195px] h-[7px] w-14 rounded-full bg-[#d1d5dc]" />
        <article className="mt-[10px] flex flex-1 flex-col overflow-hidden rounded-t-[15px] border-l-[2px] border-[#f4f4f6] shadow-[0_0_3px_rgba(0,0,0,0.1)]">
          <div className="flex h-[75px] shrink-0 flex-col bg-linear-to-r from-[#eef5ff] to-[#edf0fe]">
            <div className="mt-[10px] ml-[202px] h-[5px] w-[38px] rounded-full bg-[#d1d5dc]" />
            <div className="mt-[5px] flex h-[34px] items-center pr-[30px] pl-[19px]">
              <h2 className="flex-1 text-[20.400px] font-bold leading-none tracking-[-0.32px] whitespace-nowrap text-[#101828]">Gemeente Zeewolde</h2>
              <TriangleAlert size={23} strokeWidth={2} className="mr-[24px] text-[#ff6678]" />
              <X size={24} strokeWidth={2} className="-mr-[4px] text-[#5a6473]" />
            </div>
          </div>
          <div className="flex flex-col pr-[19px] pl-[19px]">
            <h3 className="mt-[19px] flex h-[28px] items-center text-[17.600px] font-semibold tracking-[-0.5px] text-[#1a2230]">
              <Bike size={23} strokeWidth={2.200} />
              <span className="ml-[9.500px]">Parkeren</span>
            </h3>
            <div className="mt-[19px] flex h-[54px] items-center rounded-[9px] border border-[#b9f8cf] bg-[#f0fdf4] pl-[14px] text-[#0d6b37]">
              <Check size={20} strokeWidth={2} className="-ml-px text-[#16b14f]" />
              <span className="mt-px ml-[9px] text-[15.800px] font-semibold tracking-[-0.25px]">Parkeren op stoep toegestaan</span>
            </div>
            <div className="mt-[14px] flex h-[96px] flex-col rounded-[9px] border border-[#bedbff] bg-[#eff6ff] px-[14px] pt-[15px] text-[#27439a]">
              <h4 className="flex h-[26px] items-center">
                <MapPin size={19} strokeWidth={1.900} />
                <span className="ml-[4px] text-[17.400px] font-semibold tracking-[0.05px] whitespace-nowrap">Aangewezen motorvakken (1)</span>
              </h4>
              <div className="mt-[10px] flex h-[29px] items-center justify-between">
                <span className="text-[15.600px] tracking-[-0.1px] text-[#2144bf]">Parkeergarage Ravelijn</span>
                <span className="flex h-[28px] w-[82px] items-center justify-center rounded-[5px] bg-[#bedbff] pt-px pr-px text-[13.700px] tracking-[-0.2px] text-[#1c398e]">3 plaatsen</span>
              </div>
            </div>
            <p className="mt-[14px] h-[124px] rounded-[9px] border border-[#e5e7eb] bg-[#f9fafb] pt-[15px] pl-[14px] text-[15.600px] leading-[23.500px] tracking-[-0.05px] whitespace-nowrap text-[#4a5565]">
              Motoren kunnen in heel Zeewolde gratis parkeren.<br />
              Parkeren op de stoep is toegestaan als het<br />
              voetgangers niet hindert. Er zijn geen betaalde<br />
              parkeerzones (voor motorvoertuigen).
            </p>
            <div className="mt-[19px] h-[124px] rounded-[9px] border border-[#ffc9c9] bg-[#fef2f2] pt-[20px] pl-[19px] text-[#ab1424]">
              <h4 className="flex h-[27px] items-center text-[#8a2426]">
                <X size={20} strokeWidth={1.900} className="-ml-px" />
                <span className="ml-[8px] text-[17.600px] font-semibold tracking-[-0.35px]">Parkeerverbod</span>
              </h4>
              <p className="mt-[9.500px] text-[15.600px] leading-[23.500px] tracking-[-0.14px] whitespace-nowrap">
                <b className="font-semibold">Verbod parkeren in schoolzones tijdens<br />schooltijden</b>
                <span className="ml-[9px] tracking-[-0.03px]">07:30-08:30, 15:00-16:00</span>
              </p>
            </div>
          </div>
          <footer className="mt-[28px] flex flex-1 items-center border-t border-[#eff0f3] bg-[#f9fafb] pt-[6px] pl-[18px] text-[#6a7282]">
            <Calendar size={16} strokeWidth={1.900} />
            <span className="ml-[8px] text-[14px] tracking-[-0.22px]">12-7-2025</span>
          </footer>
        </article>
      </div>
    </section>
  );
}

export default function App() {
  return (
    <main className={'relative flex h-[1200px] w-[1600px] items-start overflow-hidden bg-[#eff7ff] ' + UI}>
      <div className="absolute top-[56px] left-[1186px]"><Dots /></div>
      <div className="absolute top-[955px] left-[184px]"><Dots /></div>
      <div className="z-10 mt-[52px] ml-[291px]"><OverviewPhone /></div>
      <div className="z-10 mt-[138px] ml-[81px]"><DetailPhone /></div>
    </main>
  );
}
